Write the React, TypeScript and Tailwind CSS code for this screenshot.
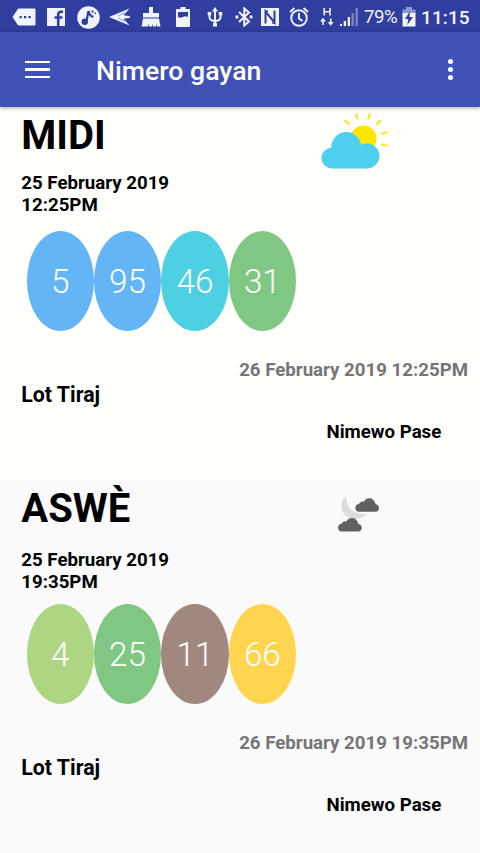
import type { ReactNode } from 'react';

type Draw = {
  name: string;
  date: string;
  time: string;
  next: string;
  bg: string;
  dateGap: string;
  icon: ReactNode;
  balls: { value: number; color: string }[];
};

function SunIcon() {
  return (
    <svg className="absolute left-[320px] top-[5px]" width="70" height="58" viewBox="320 112 70 58">
      <circle cx="363.5" cy="138.5" r="13" fill="#ffe600" />
      <path
        d="M344.7 120l4.5 4.8M355.7 113.8l2 5.5M370 113.5l-2 5.8M380.6 120.2l-4.4 4.8M387.5 132.2l-6 1.6M387.5 146l-6.3-1.8"
        stroke="#ffe620"
        strokeWidth="2.3"
      />
      <g fill="#4dd0ee">
        <circle cx="346.3" cy="147" r="15" />
        <circle cx="331.7" cy="158" r="10.3" />
        <circle cx="367" cy="156" r="12.4" />
        <path d="M331.5 156h35.5v12.4h-35.5z" />
      </g>
    </svg>
  );
}

function MoonIcon() {
  return (
    <svg className="absolute left-[336px] top-[15px]" width="46" height="40" viewBox="336 495 46 40">
      <path d="M346.500 496.500c-7 4-7 16 1 20.500c7 4 15 1.500 19.500-3c-8 0-13-1-17-5.500c-3-4-4-8-3.500-12z" fill="#dcdcdc" />
      <g fill="#616161">
        <path id="cloud" d="M358.500 511.800a3.900 3.900 0 0 1 .4-7.700c1.300-2.300 3-3 5-2.200c1.500-5 10-5.500 11.700 2.300a3.900 3.900 0 0 1 .6 7.600z" />
        <use href="#cloud" x="-17.300" y="19.700" />
      </g>
    </svg>
  );
}

const draws: Draw[] = [
  {
    name: 'MIDI',
    date: '25 February 2019',
    time: '12:25PM',
    next: '26 February 2019 12:25PM',
    bg: 'bg-[#fffffb]',
    dateGap: 'pt-[13px]',
    icon: <SunIcon />,
    balls: [
      { value: 5, color: 'bg-[#64b5f6]' },
      { value: 95, color: 'bg-[#64b5f6]' },
      { value: 46, color: 'bg-[#4dd0e1]' },
      { value: 31, color: 'bg-[#81c784]' },
    ],
  },
  {
    name: 'ASWÈ',
    date: '25 February 2019',
    time: '19:35PM',
    next: '26 February 2019 19:35PM',
    bg: 'bg-[#fafafa]',
    dateGap: 'pt-[17px]',
    icon: <MoonIcon />,
    balls: [
      { value: 4, color: 'bg-[#aed581]' },
      { value: 25, color: 'bg-[#81c784]' },
      { value: 11, color: 'bg-[#a1887f]' },
      { value: 66, color: 'bg-[#ffd54f]' },
    ],
  },
];

function StatusBar() {
  return (
    <div className="flex h-8 items-center bg-[#303f9f] pt-0.5 pl-3 text-[#f0f4ff]">
      <svg width="24" height="18" viewBox="0 0 24 18" fill="currentColor">
        <path d="M7 0.500h15.500a1 1 0 0 1 1 1v15a1 1 0 0 1-1 1H7q-1 0-1.500-1L.5 9l5-7.500Q6 .5 7 .5z" />
        <path d="M7.500 8h2.200v2.200H7.500zM12 8h2.200v2.200H12zM16.500 8h2.200v2.200h-2.200z" fill="#303f9f" />
      </svg>
      <svg className="ml-[11px]" width="18" height="18" viewBox="0 0 18 18">
        <path d="M0 0h18v18H0z" fill="currentColor" />
        <path d="M11.200 18V6.800q0-3 2.800-3h2M7.500 9.500h8" fill="none" stroke="#303f9f" strokeWidth="2.600" />
      </svg>
      <svg className="ml-3" width="23" height="23" viewBox="0 0 23 23">
        <circle cx="11.500" cy="11.500" r="11.300" fill="currentColor" />
        <path d="M9.500 15L11.500 5q1.500 6 5 5.500" fill="none" stroke="#303f9f" strokeWidth="2.200" />
        <circle cx="7.800" cy="15.800" r="3.200" fill="#303f9f" />
        <path d="M14.500 4.500h2v2h-2zM17.500 6.500h1.500V8h-1.500z" fill="#303f9f" />
      </svg>
      <svg className="ml-[9px]" width="22" height="18" viewBox="0 0 22 18">
        <path d="M0 9L20.500 0.500L14.500 7.300L21 8.300v1.400L14.500 10.700L20.500 17.500z" fill="currentColor" />
        <path d="M9 8.200L16 4.500M9 9.800L16 13.500" stroke="#303f9f" strokeWidth="0.500" />
      </svg>
      <svg className="ml-[10px]" width="20" height="20" viewBox="0 0 20 20" fill="currentColor">
        <path d="M8 0h4v6h6v4.500H2V6h6zM2 11.500h16l1.500 8H16l-.5-3-.5 3h-3l-.5-3-.5 3H8l-.5-3-.5 3H.5z" />
      </svg>
      <svg className="ml-[15px]" width="14" height="20" viewBox="0 0 14 20">
        <path d="M4.500 0h5v2H13q1 0 1 1v16q0 1-1 1H1q-1 0-1-1V3q0-1 1-1h3.500z" fill="currentColor" />
        <path d="M2 5h10v5q-2.500-1.500-5 0t-5 0z" fill="#303f9f" />
      </svg>
      <svg className="ml-[17px]" width="16" height="20" viewBox="0 0 16 20" fill="none" stroke="currentColor" strokeWidth="2">
        <path d="M8 2v16M2.500 7v3.500q0 1.500 1.500 2.500l4 1.500l4-1.500q1.500-1 1.500-2.500V7" />
        <path d="M5 4.500L8 0l3 4.500zM.7 5h3.600v3.300H.7zM11.700 5h3.600v3.300h-3.600zM6 16h4v3.500H6z" fill="currentColor" stroke="none" />
      </svg>
      <svg className="ml-[12px]" width="18" height="20" viewBox="0 0 18 20" fill="none" stroke="currentColor" strokeWidth="2">
        <path d="M4 5l10 9.500l-4.700 4V1.500L14 5.500L4 15" />
        <path d="M.5 10h2.800M14.700 10h2.800" strokeWidth="2.800" />
      </svg>
      <svg className="ml-[8px]" width="18" height="18" viewBox="0 0 18 18">
        <path d="M0 0h18v18H0z" fill="currentColor" />
        <path d="M4.500 15.500V3.500L13.500 14.500V2.500" fill="none" stroke="#303f9f" strokeWidth="2" />
        <path d="M4.500 3h2.500M11 15h2.500" stroke="#303f9f" strokeWidth="1.300" />
      </svg>
      <svg className="ml-[10px]" width="20" height="20" viewBox="0 0 20 20" fill="none" stroke="currentColor" strokeWidth="1.900">
        <circle cx="10" cy="11" r="7.800" />
        <path d="M10 6v5.500l3.500 2.500M1 5l4.500-4M19 5l-4.500-4" />
      </svg>
      <svg className="ml-[11px]" width="14" height="20" viewBox="0 0 14 20" fill="none" stroke="currentColor" strokeWidth="1.600">
        <path d="M4.200 1v7.500M10 1v7.500M4.200 4.700H10M3 18v-5M10.700 11.500v5" />
        <path d="M0 14.500l3-3.700l3 3.700zM7.700 15h6l-3 3.700z" fill="currentColor" stroke="none" />
      </svg>
      <svg className="ml-[6px]" width="18" height="18" viewBox="0 0 18 18" fill="currentColor">
        <path d="M0 16h2v2H0zM3.700 13h2.300v5H3.700zM7.700 9h2.300v9H7.700z" />
        <path d="M11.500 5h2.300v13h-2.300zM15.500 0h2.300v18h-2.300z" opacity=".4" />
      </svg>
      <span className="ml-[6px] w-[36px] pt-px text-[18.700px] leading-none tracking-[-0.500px]">79%</span>
      <svg className="ml-[2px]" width="14" height="20" viewBox="0 0 14 20">
        <path d="M4 0h6v2.500h3.500V7H.5V2.500H4z" fill="currentColor" opacity=".5" />
        <path d="M.5 6h13v13.500H.5z" fill="currentColor" />
        <path d="M8 4L3 12h3.300L5.300 18L11 10H7.500z" fill="#303f9f" />
      </svg>
      <span className="ml-[5px] pt-px text-[19px] leading-none font-medium tracking-[0.100px]">11:15</span>
    </div>
  );
}

function DrawSection({ draw }: { draw: Draw }) {
  return (
    <section className={`relative h-[373px] pt-[5px] ${draw.bg}`}>
      {draw.icon}
      <h2 className="pl-[21.300px] text-[40px] leading-[47px] font-bold">{draw.name}</h2>
      <div className={`h-[72px] pl-[21.300px] text-[18.670px] leading-[22px] font-bold ${draw.dateGap}`}>
        <p>{draw.date}</p>
        <p>{draw.time}</p>
      </div>
      <div className="flex pl-[26.500px]">
        {draw.balls.map((ball) => (
          <div
            key={ball.value}
            className={`flex h-[100px] w-[67.400px] items-center justify-center rounded-[50%] pt-px text-[33.330px] font-light text-white ${ball.color}`}
          >
            {ball.value}
          </div>
        ))}
      </div>
      <p className="mt-[28px] pr-3 text-right text-[18.670px] leading-[22px] font-bold text-[#757575]">{draw.next}</p>
      <p className="mt-px pl-[21.300px] text-[21.330px] leading-[26px] font-bold">Lot Tiraj</p>
      <button className="mt-[12px] ml-[326.500px] block text-[18.670px] leading-[24px] font-bold">Nimewo Pase</button>
    </section>
  );
}

export default function App() {
  return (
    <div className="h-[853px] w-[480px] overflow-hidden font-['Roboto',sans-serif] text-black">
      <StatusBar />
      <header className="relative z-10 flex h-[75px] items-center bg-[#3f51b5] text-white shadow-[0_1px_4px_rgba(0,0,0,0.350)]">
        <button className="ml-[25px] flex w-[25px] flex-col gap-[5px]">
          <span className="h-[2.500px] w-full bg-white" />
          <span className="h-[2.500px] w-full bg-white" />
          <span className="h-[2.500px] w-full bg-white" />
        </button>
        <h1 className="ml-[46px] pt-[3px] text-[26.670px] leading-none font-medium">Nimero gayan</h1>
        <button className="mr-[27px] ml-auto flex flex-col gap-[3px]">
          <span className="size-[5px] rounded-full bg-white" />
          <span className="size-[5px] rounded-full bg-white" />
          <span className="size-[5px] rounded-full bg-white" />
        </button>
      </header>
      {draws.map((draw) => (
        <DrawSection key={draw.name} draw={draw} />
      ))}
    </div>
  );
}
